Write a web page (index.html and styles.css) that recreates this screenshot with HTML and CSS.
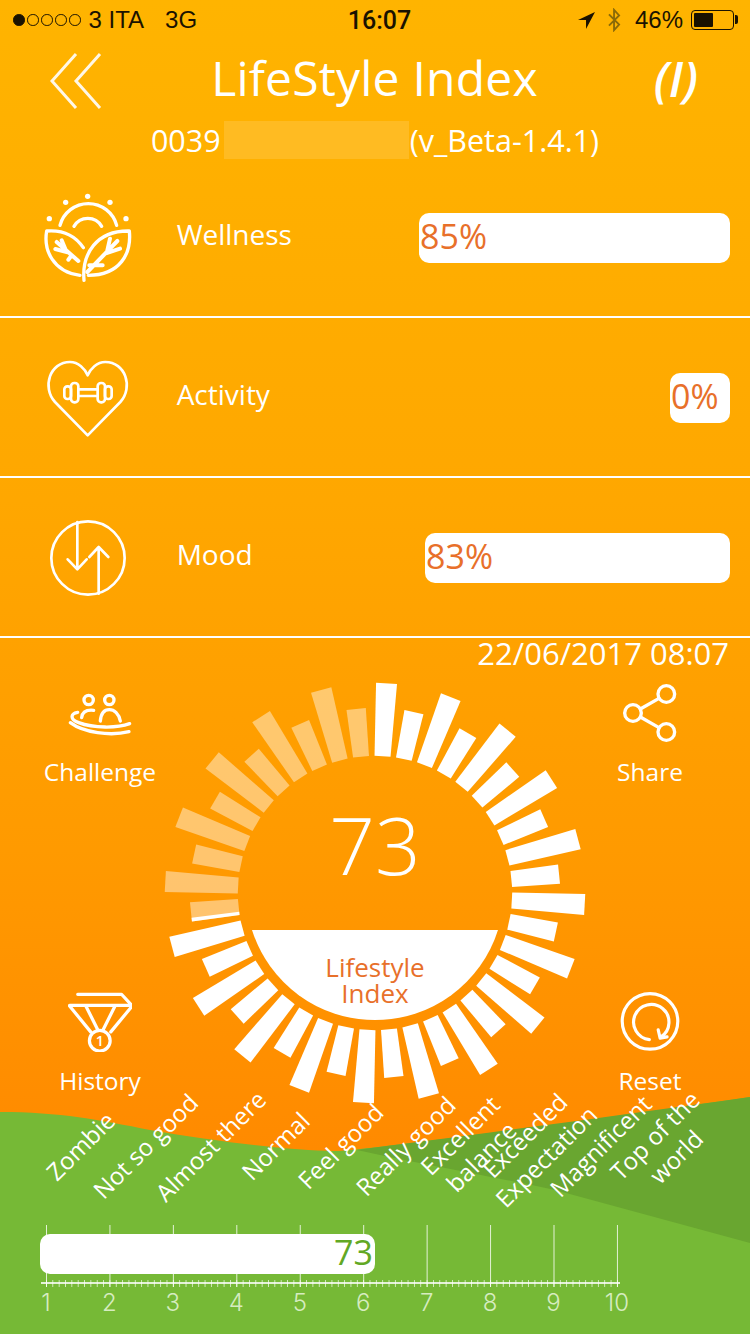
FILE: index.html
```html
<!DOCTYPE html>
<html lang="en">
<head>
  <meta charset="UTF-8">
  <meta name="viewport" content="width=device-width, initial-scale=1.0">
  <title>LifeStyle Index</title>
  <link rel="stylesheet" href="styles.css">
</head>
<body>
  <div class="statusbar">
    <div class="status-left">
      <span class="dots"><i class="on"></i><i></i><i></i><i></i><i></i></span>
      <span>3 ITA</span>
      <span class="net">3G</span>
    </div>
    <div class="status-time">16:07</div>
    <div class="status-right">
      <svg class="ico-loc" viewBox="0 0 18 18"><path d="M18 0L0 8.500h8.500V18z"/></svg>
      <svg class="ico-bt" viewBox="0 0 16 26"><path d="M2 7l11 11-5.500 6V2L13 8 2 19"/></svg>
      <span>46%</span>
      <span class="battery"><i></i></span>
    </div>
  </div>

  <header class="topbar">
    <svg class="back" viewBox="0 0 52 56"><path d="M26 1L2 28l24 27M50 1L26 28l24 27"/></svg>
    <h1>LifeStyle Index</h1>
    <div class="logo">(I)</div>
  </header>
  <div class="device">
    <span>0039</span>
    <span class="mask"></span>
    <span>(v_Beta-1.4.1)</span>
  </div>

  <div class="row">
    <svg class="row-icon" viewBox="120 59 290 290">
      <g class="line">
        <path d="M180 165A88 88 0 0 1 350 165M222 168A48 48 0 0 1 305 168"/>
        <path d="M250 232C225 195 190 178 140 182C130 240 160 305 240 315"/>
        <path d="M252 330C245 250 290 180 388 182C395 250 360 315 265 315"/>
      </g>
      <g class="line vein">
        <path d="M170 215L235 272M185 210L196 236M166 236L206 247M215 255L205 268"/>
        <path d="M352 212L262 305M330 205L322 240M360 235L315 250M268 285H308"/>
      </g>
      <g class="solid">
        <circle cx="263" cy="78" r="8"/><circle cx="197" cy="96" r="8"/><circle cx="330" cy="96" r="8"/>
        <circle cx="148" cy="145" r="8"/><circle cx="378" cy="145" r="8"/>
      </g>
    </svg>
    <span class="row-name">Wellness</span>
    <div class="pct-bar" style="width: 311px">85%</div>
  </div>

  <div class="row">
    <svg class="row-icon" viewBox="120 539 290 290">
      <g class="line thin">
        <path d="M263 795L165 695C125 650 150 575 210 575C235 575 255 595 263 615C271 595 291 575 316 575C376 575 401 650 361 695Z"/>
        <rect x="193" y="648" width="20" height="38" rx="9"/>
        <rect x="213" y="638" width="22" height="58" rx="10"/>
        <rect x="293" y="638" width="22" height="58" rx="10"/>
        <rect x="315" y="648" width="20" height="38" rx="9"/>
        <path d="M235 657H293M235 677H293"/>
      </g>
    </svg>
    <span class="row-name">Activity</span>
    <div class="pct-bar" style="width: 60px">0%</div>
  </div>

  <div class="row">
    <svg class="row-icon" viewBox="120 1019 290 290">
      <g class="line thin">
        <circle cx="264" cy="1163" r="110"/>
        <path d="M232 1055V1197M203 1167L232 1197L260 1167"/>
        <path d="M296 1270V1130M268 1160L296 1130L325 1160"/>
      </g>
    </svg>
    <span class="row-name">Mood</span>
    <div class="pct-bar" style="width: 305px">83%</div>
  </div>

  <section class="dial">
    <svg class="gauge" id="gauge" viewBox="155 673 440 440">
      <path class="half" d="M252 930H498A129 129 0 0 1 252 930Z"/>
    </svg>
    <div class="gauge-value">73</div>
    <div class="gauge-label">Lifestyle<br>Index</div>

    <div class="date">22/06/2017 08:07</div>

    <div class="actions">
      <div class="action">
        <svg class="action-icon wide" viewBox="140 60 200 140">
          <g class="line">
            <circle cx="205" cy="87" r="14"/><circle cx="267" cy="87" r="14"/>
            <path d="M184 140C186 122 200 116 220 118M240 150C242 128 252 116 267 116C282 116 296 128 300 150"/>
            <path d="M172 124C150 128 148 145 175 155C220 172 290 172 328 158"/>
            <path d="M150 155C190 185 270 196 326 182"/>
          </g>
        </svg>
        <span>Challenge</span>
      </div>
      <div class="action">
        <svg class="action-icon" viewBox="95 40 170 180">
          <g class="line">
            <circle cx="228" cy="73" r="25"/><circle cx="128" cy="130" r="25"/><circle cx="228" cy="187" r="25"/>
            <path d="M150 118L206 86M150 142L206 174"/>
          </g>
        </svg>
        <span>Share</span>
      </div>
      <div class="action">
        <svg class="action-icon" viewBox="80 35 200 185">
          <g class="line">
            <path d="M110 42H245L278 78L212 158M150 158L85 78Z"/>
            <path d="M85 76H278M135 78L172 152M225 78L188 152"/>
            <circle cx="178" cy="185" r="32"/>
          </g>
          <text class="medal-num" x="178" y="201">1</text>
        </svg>
        <span>History</span>
      </div>
      <div class="action">
        <svg class="action-icon" viewBox="85 30 190 190">
          <g class="line">
            <circle cx="180" cy="123" r="88"/>
            <path d="M178 181A56 56 0 1 1 215 172M206 150L212 176L234 172"/>
          </g>
        </svg>
        <span>Reset</span>
      </div>
    </div>
  </section>

  <footer class="meter">
    <svg class="wave" viewBox="0 1096 750 238" preserveAspectRatio="none">
      <path class="wave-light" d="M0 1112C60 1112 100 1120 150 1130C220 1142 300 1152 340 1151C380 1148 560 1125 750 1097V1334H0Z"/>
      <path class="wave-dark" d="M357 1150C450 1138 600 1118 750 1097V1243L555 1190C490 1176 420 1164 357 1150Z"/>
    </svg>

    <div class="levels">
      <span>Zombie</span>
      <span>Not so good</span>
      <span>Almost there</span>
      <span>Normal</span>
      <span>Feel good</span>
      <span>Really good</span>
      <span>Excellent<br>balance</span>
      <span>Exceeded<br>Expectation</span>
      <span>Magnificent</span>
      <span>Top of the<br>world</span>
    </div>

    <div class="ruler">
      <div class="score" style="width: 335px">73</div>
    </div>

    <div class="numbers">
      <span>1</span><span>2</span><span>3</span><span>4</span><span>5</span>
      <span>6</span><span>7</span><span>8</span><span>9</span><span>10</span>
    </div>
  </footer>

  <script>
    // ring of 40 bars, lit clockwise from the top according to the score
    const score = 73;
    const bars = 40;
    const step = 9;
    const tilt = 3.15;
    const cx = 375;
    const cy = 893;
    const inner = 137;
    const gauge = document.getElementById('gauge');

    // x runs across the bar, r along it, both turned to the bar's angle
    function point(deg, x, r) {
      const a = deg * Math.PI / 180;
      const px = cx + r * Math.sin(a) + x * Math.cos(a);
      const py = cy - r * Math.cos(a) + x * Math.sin(a);
      return px.toFixed(2) + ' ' + py.toFixed(2);
    }

    function addBar(deg, outer, share, cls) {
      const wIn = 8;
      const wOut = outer > 200 ? 10.5 : 9.7;
      const p = document.createElementNS('http://www.w3.org/2000/svg', 'path');
      p.setAttribute('d', 'M' + point(deg, -wIn, inner) + 'L' + point(deg, -wOut, outer) +
        'L' + point(deg, -wOut + 2 * wOut * share, outer) +
        'L' + point(deg, -wIn + 2 * wIn * share, inner) + 'Z');
      p.setAttribute('class', cls);
      gauge.insertBefore(p, gauge.firstChild);
    }

    const lit = score / 100 * bars;
    for (let i = 0; i < bars; i++) {
      const deg = i * step + tilt;
      const outer = i % 2 ? 185 : 210;
      if (i + 1 <= lit) {
        addBar(deg, outer, 1, 'bar');
      } else {
        addBar(deg, outer, 1, 'bar off');
        if (i < lit) {
          addBar(deg, outer, lit - i, 'bar');
        }
      }
    }
  </script>
</body>
</html>
```

FILE: styles.css
```css
* {
  margin: 0;
  padding: 0;
  box-sizing: border-box;
}

body {
  width: 750px;
  height: 1334px;
  overflow: hidden;
  background: linear-gradient(#ffb400, #ffa700 500px, #ff9a00 850px, #ff8a00 1150px);
  font-family: 'Open Sans', sans-serif;
  font-weight: 400;
  color: #fff;
}

.statusbar {
  height: 40px;
  padding: 0 12px 0 13px;
  display: grid;
  grid-template-columns: 1fr auto 1fr;
  align-items: center;
  color: #1a1200;
  font-family: 'Liberation Sans', sans-serif;
  font-size: 24px;
}

.status-left {
  display: flex;
  align-items: center;
}

.dots {
  display: flex;
  gap: 2.500px;
  margin-right: 8px;
}

.dots i {
  width: 11.500px;
  height: 11.500px;
  border: 1px solid #1a1200;
  border-radius: 50%;
}

.dots i.on {
  background-color: #1a1200;
}

.net {
  margin-left: 21px;
}

.status-time {
  font-family: Roboto, sans-serif;
  font-weight: 500;
  font-size: 25px;
  margin-left: 8px;
}

.status-right {
  display: flex;
  align-items: center;
  justify-content: flex-end;
}

.ico-loc {
  width: 17px;
  height: 17px;
  fill: #1a1200;
  margin-right: 12px;
}

.ico-bt {
  width: 15px;
  height: 24px;
  margin-right: 13px;
  fill: none;
  stroke: #8a6a08;
  stroke-width: 2;
}

.battery {
  width: 43px;
  height: 20px;
  margin: 0 4px 0 8px;
  padding: 2px;
  border: 1.500px solid #1a1200;
  border-radius: 4px;
  position: relative;
}

.battery::after {
  content: '';
  position: absolute;
  right: -5px;
  top: 4px;
  width: 3px;
  height: 9px;
  background-color: #1a1200;
  border-radius: 0 2px 2px 0;
}

.battery i {
  display: block;
  width: 19px;
  height: 100%;
  background-color: #1a1200;
  border-radius: 1px;
}

.topbar {
  height: 81px;
  padding: 0 52px 0 50px;
  display: flex;
  align-items: center;
  justify-content: space-between;
}

.back {
  width: 52px;
  height: 56px;
  fill: none;
  stroke: #fff;
  stroke-width: 3;
  opacity: 0.9;
}

.topbar h1 {
  font-weight: 400;
  font-size: 48px;
  letter-spacing: 0.200px;
  line-height: 1;
  margin-left: -7px;
  margin-top: -6px;
}

.logo {
  font-size: 48px;
  font-style: italic;
  font-weight: 600;
  line-height: 1;
  margin-top: -4px;
}

.device {
  height: 37px;
  display: flex;
  justify-content: center;
  align-items: center;
  font-size: 30.500px;
  gap: 2px;
}

.mask {
  width: 185px;
  height: 38px;
  background-color: #ffbb22;
  margin: 0 -1px 0 1px;
}

.row {
  height: 160px;
  padding: 2px 20px 0 40px;
  display: flex;
  align-items: center;
  border-bottom: 2px solid #fff;
}

.row-icon {
  width: 96.670px;
  height: 96.670px;
  flex-shrink: 0;
}

.line {
  fill: none;
  stroke: #fff;
  stroke-width: 10;
  stroke-linecap: round;
  stroke-linejoin: round;
}

.line.thin {
  stroke-width: 8;
}

.line.vein {
  stroke-width: 12;
}

.solid {
  fill: #fff;
}

.row-name {
  margin: 0 0 8px 40px;
  font-size: 28px;
  flex-grow: 1;
}

.pct-bar {
  height: 50px;
  background-color: #fff;
  border-radius: 10px;
  color: #e8702a;
  font-size: 34px;
  line-height: 46px;
  padding-left: 1px;
}

.dial {
  height: 458px;
  position: relative;
}

.gauge {
  position: absolute;
  left: 155px;
  top: 35px;
  width: 440px;
  height: 440px;
}

.bar {
  fill: #fff;
}

.bar.off {
  opacity: 0.43;
}

.half {
  fill: #fff;
}

.gauge-value {
  position: absolute;
  left: 0;
  right: 0;
  top: 151px;
  text-align: center;
  font-size: 80px;
  font-weight: 300;
  line-height: 110px;
}

.gauge-label {
  position: absolute;
  left: 0;
  right: 0;
  top: 316px;
  text-align: center;
  color: #e8702a;
  font-size: 26px;
  line-height: 26px;
}

.date {
  text-align: right;
  padding-right: 21px;
  font-size: 31px;
  line-height: 30px;
}

.actions {
  position: relative;
  height: 429px;
  display: grid;
  grid-template-columns: 200px 200px;
  grid-template-rows: auto auto;
  justify-content: space-between;
  align-content: space-between;
  padding-top: 15px;
}

.action {
  display: flex;
  flex-direction: column;
  align-items: center;
  font-size: 24.500px;
}

.action-icon {
  height: 60px;
  margin-bottom: 12px;
}

.action-icon.wide {
  height: 46.670px;
  margin-top: 8px;
  margin-bottom: 17.330px;
}

.medal-num {
  fill: #fff;
  font-size: 44px;
  font-weight: 600;
  text-anchor: middle;
}

.meter {
  height: 238px;
  position: relative;
}

.wave {
  position: absolute;
  left: 0;
  top: 0;
  width: 750px;
  height: 238px;
}

.wave-light {
  fill: #76b936;
}

.wave-dark {
  fill: #69a630;
}

.levels {
  position: relative;
  height: 100px;
  margin-left: 48px;
  display: flex;
  align-items: center;
}

.levels span {
  width: 65px;
  flex-shrink: 0;
  display: flex;
  justify-content: center;
  text-align: center;
  white-space: nowrap;
  font-size: 24px;
  line-height: 30px;
  transform: rotate(-45deg);
}

.ruler {
  position: relative;
  width: 579px;
  height: 62px;
  margin: 29px 0 0 41px;
  background-image:
    linear-gradient(rgba(255, 255, 255, 0.8), rgba(255, 255, 255, 0.8)),
    linear-gradient(90deg, rgba(255, 255, 255, 0.8) 1px, transparent 1px),
    linear-gradient(90deg, rgba(255, 255, 255, 0.7) 1px, transparent 1px);
  background-size: 100% 2px, 63.440px 100%, 6.344px 7px;
  background-position: 0 57px, 5px 0, 5px 55px;
  background-repeat: no-repeat, repeat-x, repeat-x;
}

.score {
  position: absolute;
  left: -1px;
  top: 9px;
  height: 40px;
  background-color: #fff;
  border-radius: 10px;
  color: #62a824;
  font-size: 34px;
  line-height: 36px;
  text-align: right;
  padding-right: 2px;
}

.numbers {
  position: relative;
  display: flex;
  margin: 1px 0 0 14.300px;
  font-family: Inter, sans-serif;
  font-weight: 300;
  font-size: 24px;
  line-height: 30px;
  color: #d6ecc0;
}

.numbers span {
  width: 63.440px;
  text-align: center;
}
```
